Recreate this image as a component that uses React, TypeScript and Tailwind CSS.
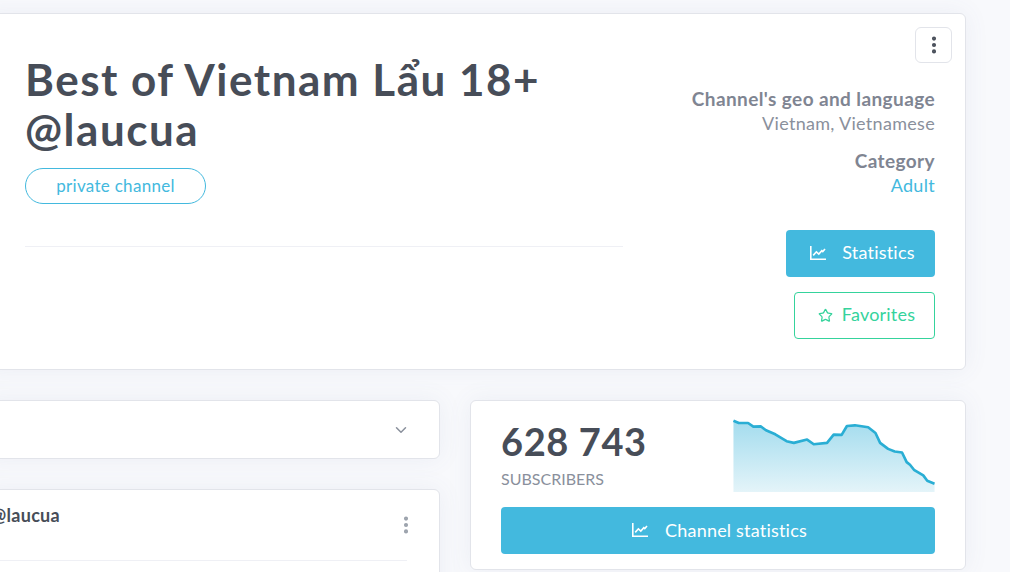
import React from 'react';
import { ChevronDown, EllipsisVertical, Star } from 'lucide-react';

const font = "font-['Lato','Noto_Sans',sans-serif]";
const card = 'rounded-md border border-[#e2e4ea] bg-white shadow-[0_0_24px_rgba(90,100,150,0.08)]';

const ChartIcon = ({ className }: { className?: string }) => (
  <svg viewBox="0 0 16 14" fill="none" stroke="currentColor" strokeWidth="1.6" className={className}>
    <path d="M.8 0v13.2h15.2" />
    <path d="M3.2 9.4 6.4 5.8l2.4 2.2 3-3.4 1 1L15 3" />
  </svg>
);

const sparkPoints =
  '24,30 40,37 68,37 84,48 106,47 122,59 150,71 184,92 206,97 246,87 266,101 306,97 326,72 350,73 366,46 390,44 430,50 452,67 466,97 490,115 510,123 532,126 546,155 556,163 568,178 596,195 608,211 630,220';

const Sparkline = () => (
  <svg viewBox="24 25 606 220" className="w-[202px] h-[73px]">
    <defs>
      <linearGradient id="spark" x1="0" y1="0" x2="0" y2="1">
        <stop offset="0%" stopColor="#a3dcee" />
        <stop offset="100%" stopColor="#e4f4f9" />
      </linearGradient>
    </defs>
    <polygon points={`24,245 ${sparkPoints} 630,245`} fill="url(#spark)" />
    <polyline points={sparkPoints} fill="none" stroke="#2aaed4" strokeWidth="8" strokeLinejoin="round" />
  </svg>
);

const App: React.FC = () => {
  return (
    <div className={`${font} h-[572px] overflow-hidden bg-[#f8f9fc] pt-[13px] text-[#474d58]`}>
      <div className="-ml-4 flex w-[982px] flex-col gap-[30px]">
        <div className={`${card} flex h-[357px] justify-between pl-[40px] pr-[30px] pt-[13px]`}>
          <div className="w-[598px] pt-[27px]">
            <h1 className="text-[44px] font-bold leading-[50px] tracking-[1.5px]">Best of Vietnam Lẩu 18+ @laucua</h1>
            <div className="mt-[14px] flex h-[36px] w-[181px] items-center justify-center rounded-full border border-[#43b9de] text-[17px] tracking-[0.3px] text-[#43b9de]">
              private channel
            </div>
            <div className="mt-[42px] border-t border-[#eff0f5]" />
          </div>
          <div className="flex flex-col items-end">
            <div className="-mr-[17px] flex h-[36px] w-[37px] items-center justify-center rounded-md border border-[#e2e4ea]">
              <EllipsisVertical className="h-[22px] w-[22px] text-[#474d58]" strokeWidth={2.5} />
            </div>
            <div className="mt-[24px] text-[19px] font-bold leading-[24px] tracking-[0.4px] text-[#7f8592]">Channel's geo and language</div>
            <div className="text-[18px] leading-[24px] tracking-[0.3px] text-[#8a909c]">Vietnam, Vietnamese</div>
            <div className="mt-[14px] text-[19px] font-bold leading-[24px] tracking-[0.4px] text-[#7f8592]">Category</div>
            <div className="text-[18px] leading-[24px] tracking-[0.3px] text-[#43b9de]">Adult</div>
            <div className="mt-[33px] flex h-[47px] w-[149px] items-center justify-center gap-[16px] rounded bg-[#43b9de] pb-[2px] pl-[4px] text-[18px] tracking-[0.2px] text-white">
              <ChartIcon className="mt-[1px] h-[14px] w-[16px]" />
              Statistics
            </div>
            <div className="mt-[15px] flex h-[47px] w-[141px] items-center justify-center gap-[9px] rounded border border-[#35d39c] pb-[2px] pl-[4px] text-[18px] tracking-[0.2px] text-[#35d39c]">
              <Star className="mt-[1px] h-[15px] w-[15px]" strokeWidth={2} />
              Favorites
            </div>
          </div>
        </div>

        <div className="flex gap-[30px]">
          <div className="flex w-[456px] flex-col gap-[30px]">
            <div className={`${card} flex h-[59px] items-center justify-end pr-[29px]`}>
              <ChevronDown className="h-[18px] w-[18px] text-[#8a909c]" />
            </div>
            <div className={`${card} h-[120px] pl-[6px] pr-[32px] pt-[13px]`}>
              <div className="flex items-start justify-between">
                <span className="text-[18px] font-bold leading-[24px] tracking-[0.3px]">@laucua</span>
                <EllipsisVertical className="mt-[11px] -mr-[10px] h-[22px] w-[22px] text-[#9aa1ab]" strokeWidth={2.5} />
              </div>
              <div className="mt-[24px] border-t border-[#eff0f5]" />
            </div>
          </div>

          <div className={`${card} h-[170px] w-[496px] px-[30px] pt-[15px]`}>
            <div className="flex justify-between">
              <div>
                <div className="text-[38px] font-bold leading-[50px] tracking-[0.6px]">628 743</div>
                <div className="mt-[3px] text-[16px] leading-[20px] text-[#8a909c]">SUBSCRIBERS</div>
              </div>
              <div className="pt-[3px]">
                <Sparkline />
              </div>
            </div>
            <div className="mt-[15px] flex h-[47px] items-center justify-center gap-[17px] rounded bg-[#43b9de] pb-[1px] pl-[3px] text-[18px] tracking-[0.2px] text-white">
              <ChartIcon className="h-[14px] w-[16px]" />
              Channel statistics
            </div>
          </div>
        </div>
      </div>
    </div>
  );
};

export default App;
